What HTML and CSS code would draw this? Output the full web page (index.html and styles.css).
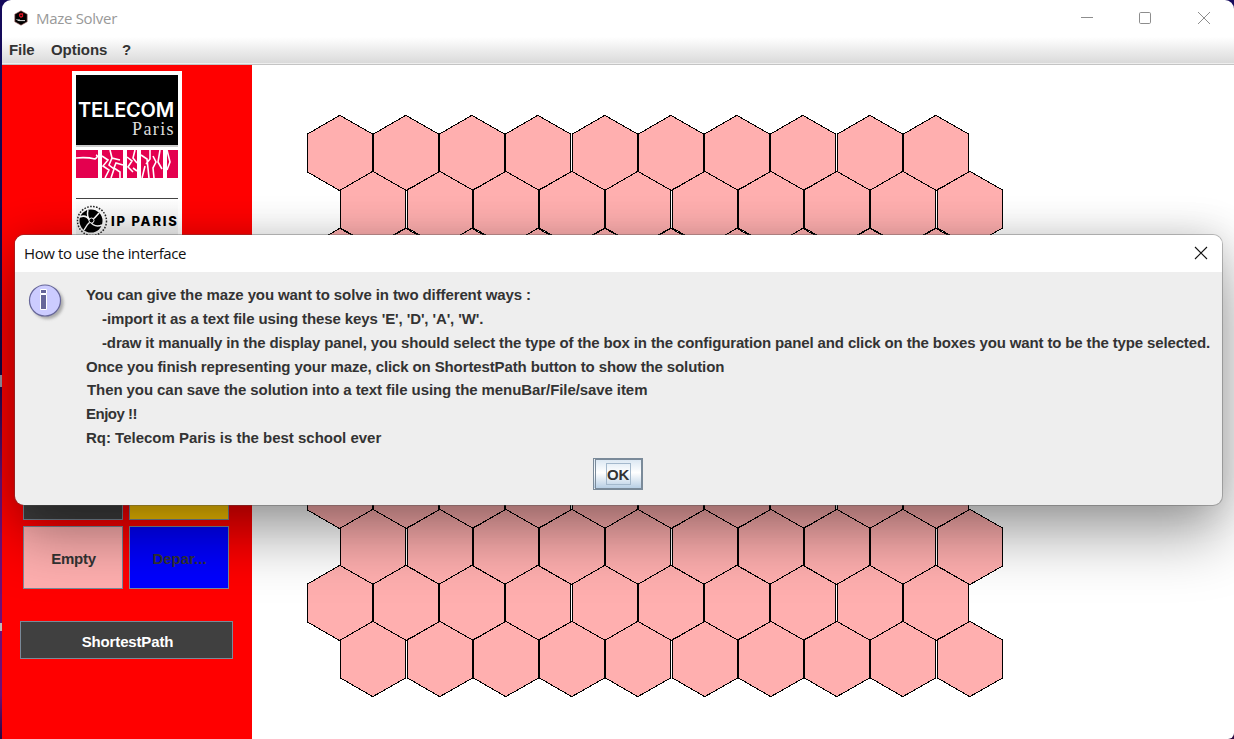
FILE: index.html
```html
<!DOCTYPE html>
<html lang="en">
<head>
<meta charset="utf-8">
<title>Maze Solver</title>
<link rel="stylesheet" href="styles.css">
</head>
<body>
<div class="desktop">
  <span class="stray stray-bar"></span>
  <span class="stray stray-letter"></span>
  <main class="window">
    <header class="titlebar">
      <svg class="app-icon" width="16" height="16" viewBox="0 0 16 16">
        <path d="M8 .8 14.2 4.2v7.6L8 15.2 1.8 11.8V4.2z" fill="#000" stroke="#a66" stroke-width=".6"/>
        <path d="M6.500 4h3v2.400L8 7.200 6.600 6v-2" fill="none" stroke="#e01020" stroke-width="1.300"/>
        <path d="M3.500 9.500 6 10.600h6M6 9v2" fill="none" stroke="#ddd" stroke-width="1"/>
      </svg>
      <span class="app-name">Maze Solver</span>
      <svg class="controls" width="130" height="14" viewBox="0 0 130 14" fill="none" stroke="#8d8d8d">
        <path d="M0 6.500h12"/>
        <rect x="58.500" y="1.500" width="11" height="11" rx="1.200"/>
        <path d="m117 1 12 12m0-12-12 12"/>
      </svg>
    </header>
    <nav class="menubar"><span class="m-file">File</span><span class="m-options">Options</span><span>?</span></nav>
    <div class="content">
      <aside class="sidebar">
        <div class="logo">
          <div class="telecom"><span class="telecom-name">TELECOM</span><span class="telecom-city">Paris</span></div>
          <svg class="strip" width="102" height="28" viewBox="0 0 102 28">
            <path d="M0 0h22v28H0zM26 0h21v28H26zM51 0h10v28H51zM65 0h22v28H65zM91 0h11v28H91z" fill="#e4004f"/>
            <path d="M0 8q11-1 19 1q4-3 1-4M26 6l6 4-5 6 6 4-4 8M34 0l2 8 8 2M36 8l-3 7 5 4-3 9M47 15l-7-2-2 5 6 4v6M51 7l5 4-4 6 5 5M59 0l-2 8 4 5M57 18l4 3M65 5l6 4 2 19M74 0v9l-4 5M77 6l3 6-3 6 1 10M84 0l-2 12 4 7M69 16l-3 12M91 0l3 12-3 8" fill="none" stroke="#fff" stroke-width="1.600"/>
          </svg>
          <div class="ip">
            <svg width="32" height="34" viewBox="0 0 32 34">
              <circle cx="16" cy="17" r="14.500" fill="none" stroke="#222" stroke-width="1.500" stroke-dasharray="1.600 1.400"/>
              <circle cx="15" cy="17" r="11.500" fill="#000"/>
              <path d="M4 13q6-3 10 4t12 4M8 26q3-6 7-9t8-8M12 6q-2 7 3 11" fill="none" stroke="#fff" stroke-width="1.500"/>
              <circle cx="15.500" cy="16.500" r="2.500" fill="#000" stroke="#fff"/>
            </svg>
            <span>IP PARIS</span>
          </div>
        </div>
        <div class="types">
          <button class="type wall" aria-label="Wall"></button>
          <button class="type arrival" aria-label="Arrival"></button>
          <button class="type empty">Empty</button>
          <button class="type departure">Depar...</button>
        </div>
        <button class="solve">ShortestPath</button>
      </aside>
      <svg class="maze" width="980" height="674" viewBox="252 65 980 674">
        <defs>
          <polygon id="hex" points="0.500,19 32.500,0.500 33,0.500 65.500,19 65.500,57 33,75.500 32.500,75.500 0.500,57"/>
          <g id="even">
            <use href="#hex" x="307"/><use href="#hex" x="373"/><use href="#hex" x="439"/><use href="#hex" x="505"/><use href="#hex" x="572"/><use href="#hex" x="638"/><use href="#hex" x="704"/><use href="#hex" x="770"/><use href="#hex" x="837"/><use href="#hex" x="903"/>
          </g>
          <g id="odd">
            <use href="#hex" x="340"/><use href="#hex" x="407"/><use href="#hex" x="473"/><use href="#hex" x="539"/><use href="#hex" x="605"/><use href="#hex" x="672"/><use href="#hex" x="738"/><use href="#hex" x="804"/><use href="#hex" x="870"/><use href="#hex" x="937"/>
          </g>
        </defs>
        <g class="cells">
          <use href="#even" y="115"/><use href="#odd" y="171"/>
          <use href="#even" y="228"/><use href="#odd" y="284"/>
          <use href="#even" y="340"/><use href="#odd" y="396"/>
          <use href="#even" y="453"/><use href="#odd" y="509"/>
          <use href="#even" y="565"/><use href="#odd" y="621"/>
        </g>
      </svg>
    </div>
  </main>
  <section class="dialog" role="dialog">
    <header class="dialog-title">
      <span>How to use the interface</span>
      <svg width="14" height="14" viewBox="0 0 14 14" fill="none" stroke="#111" stroke-width="1.100"><path d="m1 1 12 12m0-12L1 13"/></svg>
    </header>
    <div class="dialog-main">
      <svg class="info" width="40" height="42" viewBox="0 0 40 42">
        <defs><filter id="soft"><feGaussianBlur stdDeviation="1.500"/></filter></defs>
        <circle cx="19.500" cy="20" r="16" fill="#999" filter="url(#soft)" opacity=".8"/>
        <circle cx="17" cy="17.500" r="15.500" fill="#ccf" stroke="#669" stroke-width="1.200"/>
        <path d="M12.500 6.500h6v4h-6zM12.500 11.500h6v15h-6z" fill="#669" stroke="#fff"/>
      </svg>
      <div class="message">
        <p class="l1">You can give the maze you want to solve in two different ways :</p>
        <p class="l2 indent">-import it as a text file using these keys 'E', 'D', 'A', 'W'.</p>
        <p class="l3 indent">-draw it manually in the display panel, you should select the type of the box in the configuration panel and click on the boxes you want to be the type selected.</p>
        <p class="l4">Once you finish representing your maze, click on ShortestPath button to show the solution</p>
        <p class="l5">Then you can save the solution into a text file using the menuBar/File/save item</p>
        <p class="l6">Enjoy !!</p>
        <p class="l7">Rq: Telecom Paris is the best school ever</p>
      </div>
    </div>
    <footer class="actions"><button class="ok"><span>OK</span></button></footer>
  </section>
</div>
</body>
</html>
```
FILE: styles.css
```css
* { box-sizing: border-box; }
body { margin: 0; font: bold 15px "Liberation Sans", Arial, sans-serif; color: #333; }
p { margin: 0; }
button { font: inherit; color: inherit; padding: 0; margin: 0; border-radius: 0; }
.desktop { position: relative; width: 1234px; height: 739px; overflow: hidden; padding-left: 2px; background: linear-gradient(#150a5c, #120844 50%, #6d1078 65%, #6d1078 94%, #2a0840); }
.stray { position: absolute; left: 0; }
.stray-bar { top: 375px; width: 2px; height: 12px; background: #99a; }
.stray-letter { top: 623px; width: 2px; height: 8px; background: #bbb; }
.window { height: 739px; display: flex; flex-direction: column; border-radius: 9px 9px 6px 0; overflow: hidden; background: #fff; }
.titlebar { height: 37px; display: flex; align-items: center; padding: 0 23px 0 11px; }
.app-icon { margin-top: -2px; }
.app-name { margin: -2px 0 0 7px; font: 15px "Open Sans", sans-serif; color: #999; letter-spacing: -.3px; }
.controls { margin-left: auto; margin-top: -1px; }
.menubar { height: 28px; display: flex; padding: 4px 0 0 7px; letter-spacing: -.05px; background: linear-gradient(#fff, #dadada 26px, #eee 26px, #eee 27px, #c4c4c4 27px); }
.m-file { width: 42px; }
.m-options { width: 71px; }
.content { flex: 1; display: flex; min-height: 0; }
.sidebar { width: 250px; background: #f00; display: flex; flex-direction: column; align-items: center; padding: 6px 0 0; }
.logo { width: 110px; height: 168px; background: #fff; padding: 4px; display: flex; flex-direction: column; margin-bottom: 218px; }
.telecom { flex: none; height: 70px; background: #000; color: #fff; display: flex; flex-direction: column; align-items: flex-end; padding: 25px 4px 0 0; box-shadow: 0 2px #ccc; }
.telecom-name { font: 600 20px/20px Inter, sans-serif; letter-spacing: -.2px; }
.telecom-city { font: 18px/18px "Liberation Serif", serif; color: #ddd; letter-spacing: 1.4px; margin-right: -1px; }
.strip { margin-top: 5px; flex: none; }
.ip { flex: none; margin-top: 20px; border-top: 1px solid #444; background: linear-gradient(#fff, #eee); display: flex; align-items: center; height: 38px; padding-top: 6px; color: #000; }
.ip svg { flex: none; }
.ip span { font: 800 13px Inter, sans-serif; letter-spacing: 1.8px; margin-left: 3px; white-space: nowrap; }
.types { display: grid; grid-template-columns: 100px 100px; gap: 6px; margin-right: 2px; letter-spacing: -.3px; }
.type { height: 63px; border: 1px solid #7a8a99; padding: 2px 0 0 1px; letter-spacing: inherit; }
.wall { background: #404040; }
.arrival { background: #ffc800; }
.empty { background: #ffafaf; }
.departure { background: #00f; letter-spacing: 0; }
.solve { width: 213px; height: 38px; margin: 32px 1px 0 0; border: 1px solid #7a8a99; background: #404040; color: #fff; padding: 2px 0 0 2px; letter-spacing: -.15px; }
.cells { fill: #ffafaf; stroke: #000; stroke-width: 1; shape-rendering: crispEdges; }
.dialog { position: absolute; left: 15px; top: 235px; width: 1207px; height: 270px; border-radius: 9px; background: #eee; box-shadow: 0 0 0 1px rgba(80,80,80,.35), 0 32px 60px rgba(0,0,0,.34), 0 0 40px rgba(0,0,0,.18); }
.dialog-title { height: 37px; border-radius: 9px 9px 0 0; background: #fff; display: flex; align-items: center; justify-content: space-between; padding: 0 14px 2px 9px; font: 15px "Open Sans", sans-serif; color: #111; letter-spacing: -.38px; }
.dialog-main { display: flex; padding: 11px 0 0 13px; height: 186px; }
.info { flex: none; margin-right: 18px; }
.message { display: flex; flex-direction: column; line-height: 23.8px; white-space: nowrap; }
.indent { padding-left: 16px; }
.l1, .l2 { letter-spacing: -.105px; }
.l3 { letter-spacing: -.138px; }
.l4 { padding-top: 1px; margin-bottom: -1px; letter-spacing: -.114px; }
.l5 { padding-left: 1px; letter-spacing: -.08px; }
.l6 { letter-spacing: -.5px; }
.l7 { letter-spacing: -.01px; }
.actions { display: flex; justify-content: center; padding-right: 2px; }
.ok { width: 50px; height: 32px; border: 2px solid #7a8a99; border-left: 3px double #7a8a99; background: linear-gradient(#dce8f3, #fff 45%, #b8cfe5); display: grid; place-items: center; }
.ok span { border: 1px solid #a3b8cc; width: 25px; height: 22px; line-height: 22px; text-align: center; letter-spacing: -.2px; }
```
